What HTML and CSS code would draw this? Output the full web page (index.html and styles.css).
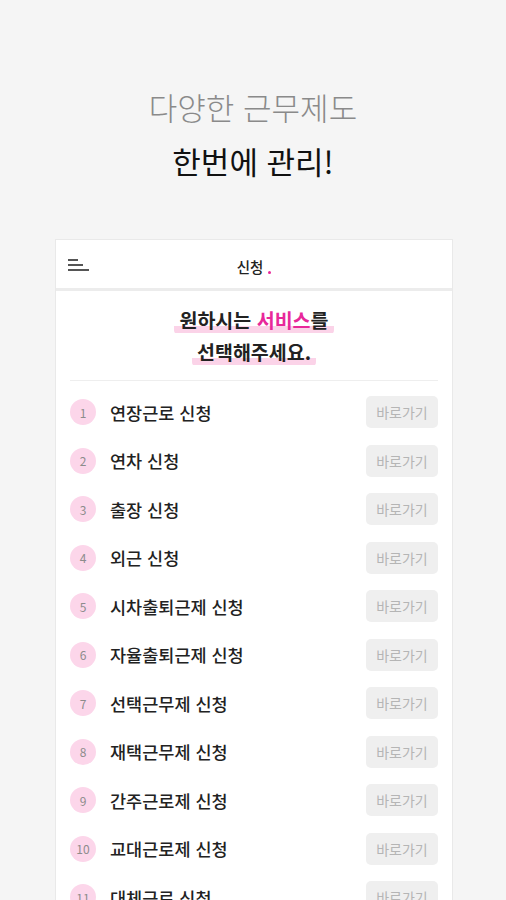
FILE: index.html
```html
<!DOCTYPE html>
<html lang="ko">
<head>
    <meta charset="UTF-8">
    <meta name="viewport" content="width=device-width, initial-scale=1.0">
    <title>신청</title>
    <link rel="stylesheet" href="styles.css">
</head>
<body>

    <div class="intro">
        <p class="intro-sub">다양한 근무제도</p>
        <p class="intro-main">한번에 관리!</p>
    </div>

    <section class="card">
        <div class="card-header">
            <svg class="menu-icon" width="22" height="14" viewBox="0 0 22 14">
                <rect x="0" y="1" width="10" height="2" fill="#555"/>
                <rect x="0" y="6" width="15" height="2" fill="#555"/>
                <rect x="0" y="11" width="21" height="2" fill="#555"/>
            </svg>
            <h2>신청<span class="dot"></span></h2>
        </div>

        <div class="card-body">
            <h3 class="pick">
                <span class="mark">원하시는 <em>서비스</em>를</span><br>
                <span class="mark">선택해주세요.</span>
            </h3>

            <ul class="apply-list" id="apply-list"></ul>
        </div>
    </section>

    <script>
        const names = [
            "연장근로 신청", "연차 신청", "출장 신청", "외근 신청",
            "시차출퇴근제 신청", "자율출퇴근제 신청", "선택근무제 신청",
            "재택근무제 신청", "간주근로제 신청", "교대근로제 신청", "대체근로 신청"
        ];
        const list = document.getElementById('apply-list');
        names.forEach((name, i) => {
            const li = document.createElement('li');
            li.className = 'apply-item';
            li.innerHTML = `<span class="num">${i + 1}</span>
                <span class="apply-name">${name}</span>
                <button class="go-btn">바로가기</button>`;
            list.appendChild(li);
        });
    </script>
</body>
</html>
```

FILE: styles.css
```css
body {
    margin: 0;
    padding: 0;
    background-color: #f5f5f5;
    font-family: "Noto Sans CJK KR", "Noto Sans", sans-serif;
    color: #222;
}

.intro {
    text-align: center;
    padding-top: 80px;
}
.intro p {
    margin: 0;
    font-size: 31px;
    line-height: 54px;
}
.intro-sub {
    color: #8a8a8a;
    font-weight: 300;
}
.intro-main {
    color: #111;
    font-weight: 400;
}

.card {
    margin: 51px 53px 0 55px;
    background: #fff;
    border: 1px solid #e9e9e9;
    border-bottom: none;
}

.card-header {
    position: relative;
    height: 48px;
    display: flex;
    align-items: center;
    justify-content: center;
    border-bottom: 3px solid #ececec;
}
.menu-icon {
    position: absolute;
    left: 12px;
    top: 18px;
}
.card-header h2 {
    margin: 0;
    font-size: 14.5px;
    font-weight: 500;
    color: #222;
    position: relative;
    top: 2px;
}
.dot {
    display: inline-block;
    width: 3px;
    height: 3px;
    border-radius: 50%;
    background: #e8289a;
    margin-left: 5px;
    vertical-align: -1px;
}

.card-body {
    padding: 0 14px;
}

.pick {
    margin: 0;
    padding: 13px 0 12px;
    text-align: center;
    font-size: 19.5px;
    font-weight: 700;
    line-height: 32px;
    border-bottom: 1px solid #eeeeee;
}
.mark {
    background: linear-gradient(transparent 72%, #fbd3e8 72%, #fbd3e8 95%, transparent 95%);
    padding: 0 5px;
    border-radius: 4px;
}
.pick em {
    font-style: normal;
    color: #e8289a;
}

.apply-list {
    list-style: none;
    margin: 0;
    padding: 7px 0 0;
}
.apply-item {
    display: flex;
    align-items: center;
    height: 48.5px;
}
.num {
    width: 26px;
    height: 26px;
    border-radius: 50%;
    background: #fcd6ea;
    color: #8c8c8c;
    font-size: 12px;
    display: flex;
    align-items: center;
    justify-content: center;
    margin-right: 14px;
}
.apply-name {
    flex: 1;
    font-size: 17.5px;
    font-weight: 500;
    color: #222;
}
.go-btn {
    width: 72px;
    height: 32px;
    border: none;
    border-radius: 5px;
    background: #efefef;
    color: #b5b5b5;
    font-family: inherit;
    font-size: 14px;
    padding: 0;
}
```
